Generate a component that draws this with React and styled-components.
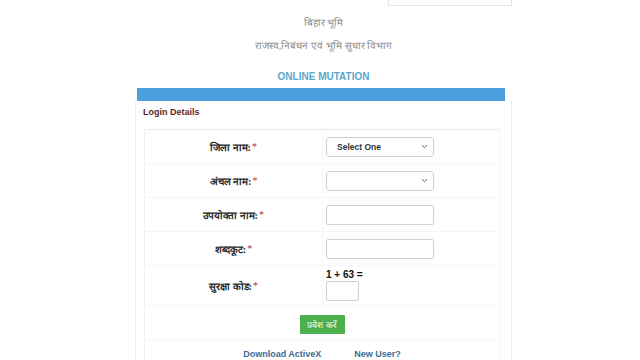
import styled, { createGlobalStyle } from "styled-components";

const Global = createGlobalStyle`
  html, body { margin: 0; padding: 0; background: #fff; }
  body { font-family: "Liberation Sans", Arial, sans-serif; }
`;

const Page = styled.div`
  width: 377px;
  margin-left: 135px;
  display: flex;
  flex-direction: column;
  align-items: center;
`;

const TopStrip = styled.div`
  align-self: flex-end;
  width: 122px;
  height: 5px;
  border: 1px solid #e6e6e6;
  border-top: none;
`;

const SubTitle = styled.div`
  color: #8a8a8a;
  font-size: 10px;
  margin-top: ${p => p.$top}px;
  line-height: 12px;
`;

const Heading = styled.div`
  color: #5aa7cc;
  font-weight: bold;
  font-size: 10px;
  margin-top: 19px;
  line-height: 12px;
`;

const BlueBar = styled.div`
  align-self: flex-start;
  margin-left: 2px;
  width: 368px;
  height: 13px;
  margin-top: 5px;
  background: #4aa0dc;
`;

const Panel = styled.div`
  align-self: stretch;
  border-left: 1px solid #f0f0f0;
  border-right: 1px solid #f0f0f0;
  padding: 0 11px 0 8px;
`;

const PanelHead = styled.div`
  color: #5b1d2e;
  font-weight: bold;
  font-size: 9px;
  padding: 6px 0 0;
  height: 22px;
  box-sizing: border-box;
  margin-left: -1px;
`;

const Table = styled.div`
  border-top: 1px solid #e8e8e8;
  border-left: 1px solid #f0f0f0;
  border-right: 1px solid #f5f5f5;
  margin-top: 6px;
  display: grid;
  grid-template-columns: 178px 1fr;
`;

const Label = styled.div`
  height: ${p => p.$h}px;
  display: flex;
  align-items: center;
  justify-content: center;
  font-size: 10px;
  font-weight: bold;
  color: #2a2a2a;
  border-bottom: 1px solid #f5f5f5;
  border-right: 1px solid #f8f8f8;
  font-family: "Liberation Serif", "Noto Serif", serif;
`;

const Star = styled.span`
  color: #c03030;
  font-weight: normal;
  margin-left: 1px;
`;

const Cell = styled.div`
  height: ${p => p.$h}px;
  display: flex;
  flex-direction: column;
  justify-content: center;
  padding-left: 3px;
  border-bottom: 1px solid #f5f5f5;
`;

const Select = styled.div`
  width: 108px;
  height: 20px;
  box-sizing: border-box;
  border: 1px solid #d0d0d0;
  border-radius: 3px;
  display: flex;
  align-items: center;
  justify-content: space-between;
  padding: 0 5px 0 10px;
  font-size: 8.5px;
  font-weight: bold;
  color: #333;
  background: #fff;
`;

const Input = styled.div`
  width: ${p => p.$w || 108}px;
  height: 20px;
  box-sizing: border-box;
  border: 1px solid #d0d0d0;
  border-radius: 2px;
  background: #fff;
`;

const Captcha = styled.div`
  font-size: 10px;
  font-weight: bold;
  color: #111;
  line-height: 10px;
  margin-bottom: 1px;
`;

const Full = styled.div`
  grid-column: 1 / 3;
  height: ${p => p.$h}px;
  display: flex;
  align-items: center;
  justify-content: center;
  gap: ${p => p.$gap || 0}px;
  border-bottom: ${p => (p.$line ? "1px solid #f5f5f5" : "none")};
`;

const Button = styled.div`
  background: #4cae4c;
  color: #fff;
  width: 45px;
  height: 19px;
  display: flex;
  align-items: center;
  justify-content: center;
  font-size: 9px;
  border-radius: 1px;
  margin-top: 2px;
  font-family: "Liberation Serif", serif;
`;

const Link = styled.span`
  color: #3b6c90;
  font-weight: bold;
  font-size: 9px;
`;

const Chevron = () => (
  <svg width="7" height="5" viewBox="0 0 7 5">
    <path d="M1 1.2 L3.5 3.6 L6 1.2" stroke="#555" strokeWidth="0.9" fill="none" />
  </svg>
);

const rows = [
  { label: "जिला नाम:", h: 33, kind: "select", text: "Select One" },
  { label: "अंचल नाम: ", h: 33, kind: "select", text: "" },
  { label: "उपयोक्ता नाम:", h: 33, kind: "input" },
  { label: "शब्दकूट:", h: 33, kind: "input" },
];

export default function App() {
  return (
    <>
      <Global />
      <Page>
        <TopStrip />
        <SubTitle $top={11}>बिहार भूमि</SubTitle>
        <SubTitle $top={11}>राजस्व,निबंधन एवं भूमि सुधार विभाग</SubTitle>
        <Heading>ONLINE MUTATION</Heading>
        <BlueBar />
        <Panel>
          <PanelHead>Login Details</PanelHead>
          <Table>
            {rows.map(r => (
              <>
                <Label key={r.label + "l"} $h={r.h}>
                  {r.label}
                  <Star>*</Star>
                </Label>
                <Cell key={r.label + "c"} $h={r.h}>
                  {r.kind === "select" ? (
                    <Select>
                      <span>{r.text}</span>
                      <Chevron />
                    </Select>
                  ) : (
                    <Input />
                  )}
                </Cell>
              </>
            ))}
            <Label $h={39}>
              सुरक्षा कोड:<Star>*</Star>
            </Label>
            <Cell $h={39}>
              <Captcha>1 + 63 =</Captcha>
              <Input $w={33} />
            </Cell>
            <Full $h={34} $line>
              <Button>प्रवेश करें</Button>
            </Full>
            <Full $h={26} $gap={33}>
              <Link>Download ActiveX</Link>
              <Link>New User?</Link>
            </Full>
          </Table>
        </Panel>
      </Page>
    </>
  );
}
